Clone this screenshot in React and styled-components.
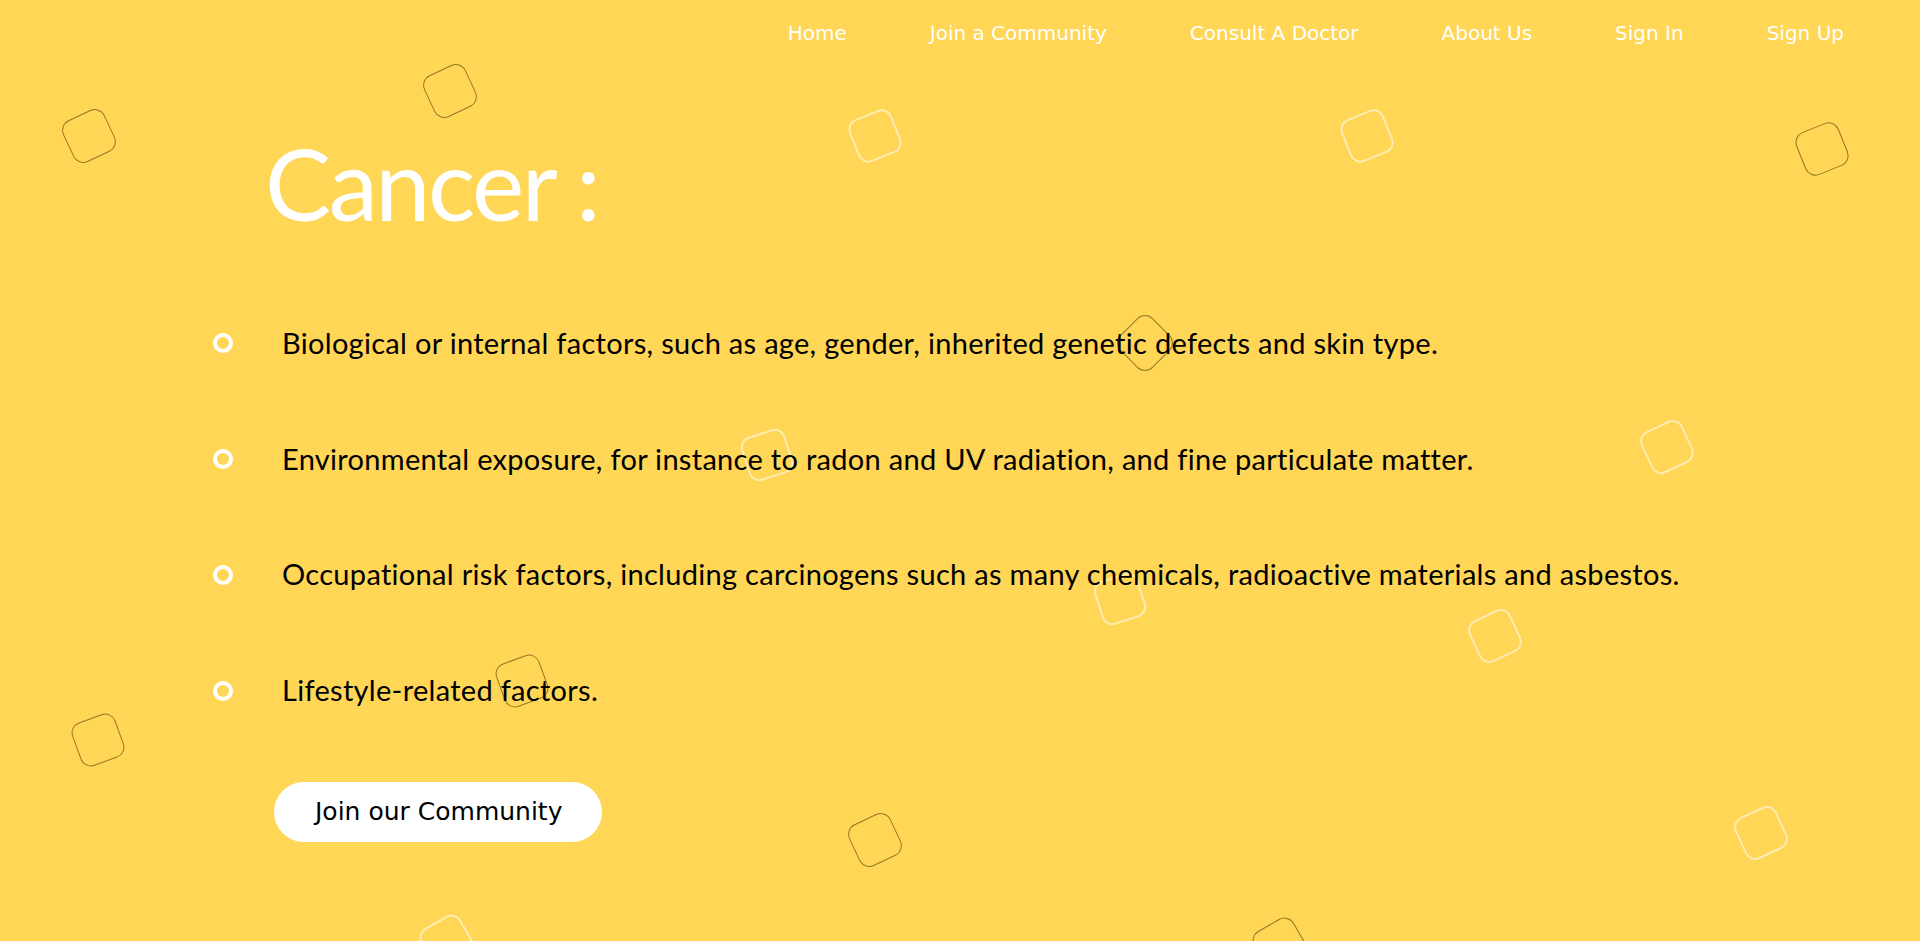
import React from 'react';
import styled, { createGlobalStyle } from 'styled-components';

const GlobalStyle = createGlobalStyle`
  html, body {
    margin: 0;
    padding: 0;
  }
  body {
    background: #ffd655;
  }
`;

const Page = styled.div`
  position: relative;
  height: 941px;
  overflow: hidden;
  background: #ffd655;
  font-family: Lato, "Open Sans", sans-serif;
`;

const Shapes = styled.div`
  position: absolute;
  inset: 0;
  pointer-events: none;
`;

const Square = styled.span`
  position: absolute;
  left: ${(p) => p.$x - 23}px;
  top: ${(p) => p.$y - 23}px;
  width: 46px;
  height: 46px;
  box-sizing: border-box;
  border-radius: 11px;
  border: ${(p) => (p.$light ? '2px solid rgba(255,255,255,0.55)' : '1px solid rgba(90,70,10,0.65)')};
  transform: rotate(${(p) => p.$rot}deg);
`;

const Nav = styled.nav`
  position: relative;
  z-index: 1;
  display: flex;
  justify-content: flex-end;
  align-items: center;
  gap: 83px;
  height: 66px;
  padding-right: 76px;
`;

const NavLink = styled.a`
  font-family: "DejaVu Sans", Verdana, sans-serif;
  font-size: 20px;
  color: #fff;
  text-decoration: none;
  cursor: pointer;
`;

const Main = styled.main`
  position: relative;
  z-index: 1;
  padding-left: 213px;
`;

const Title = styled.h1`
  margin: 58px 0 0 52px;
  font-size: 99px;
  font-weight: 400;
  line-height: 1.2;
  letter-spacing: -2.5px;
  color: #fff;
`;

const List = styled.ul`
  list-style: none;
  margin: 83px 0 0;
  padding: 0;
  display: flex;
  flex-direction: column;
  gap: 81px;
`;

const Item = styled.li`
  display: flex;
  align-items: center;
  gap: 49px;
  font-size: 29px;
  line-height: 1.2;
  letter-spacing: 0.3px;
  color: #000;
`;

const Dot = styled.span`
  flex: none;
  width: 20px;
  height: 20px;
  box-sizing: border-box;
  border: 4px solid #fff;
  border-radius: 50%;
`;

const JoinButton = styled.button`
  margin: 74px 0 0 61px;
  height: 60px;
  padding: 0 40px 0 41px;
  border: none;
  border-radius: 30px;
  background: #fff;
  color: #000;
  font-family: "DejaVu Sans", Verdana, sans-serif;
  font-size: 25px;
  cursor: pointer;
`;

const links = ['Home', 'Join a Community', 'Consult A Doctor', 'About Us', 'Sign In', 'Sign Up'];

const factors = [
  'Biological or internal factors, such as age, gender, inherited genetic defects and skin type.',
  'Environmental exposure, for instance to radon and UV radiation, and fine particulate matter.',
  'Occupational risk factors, including carcinogens such as many chemicals, radioactive materials and asbestos.',
  'Lifestyle-related factors.',
];

// floating squares in the background
const squares = [
  { x: 89, y: 136, rot: -25 },
  { x: 450, y: 91, rot: -25 },
  { x: 875, y: 136, rot: -22, light: true },
  { x: 1367, y: 136, rot: -22, light: true },
  { x: 1822, y: 149, rot: -22 },
  { x: 1145, y: 343, rot: -45 },
  { x: 767, y: 455, rot: -18, light: true },
  { x: 1667, y: 447, rot: -25, light: true },
  { x: 1120, y: 599, rot: -18, light: true },
  { x: 1495, y: 636, rot: -25, light: true },
  { x: 522, y: 681, rot: -20 },
  { x: 98, y: 740, rot: -20 },
  { x: 875, y: 840, rot: -25 },
  { x: 1761, y: 833, rot: -25, light: true },
  { x: 447, y: 942, rot: -30, light: true },
  { x: 1280, y: 945, rot: -30 },
];

const App = () => {
  return (
    <Page>
      <GlobalStyle />
      <Shapes>
        {squares.map((s, i) => (
          <Square key={i} $x={s.x} $y={s.y} $rot={s.rot} $light={s.light} />
        ))}
      </Shapes>
      <Nav>
        {links.map((l) => (
          <NavLink key={l}>{l}</NavLink>
        ))}
      </Nav>
      <Main>
        <Title>Cancer :</Title>
        <List>
          {factors.map((f) => (
            <Item key={f}>
              <Dot />
              {f}
            </Item>
          ))}
        </List>
        <JoinButton>Join our Community</JoinButton>
      </Main>
    </Page>
  );
};

export default App;
